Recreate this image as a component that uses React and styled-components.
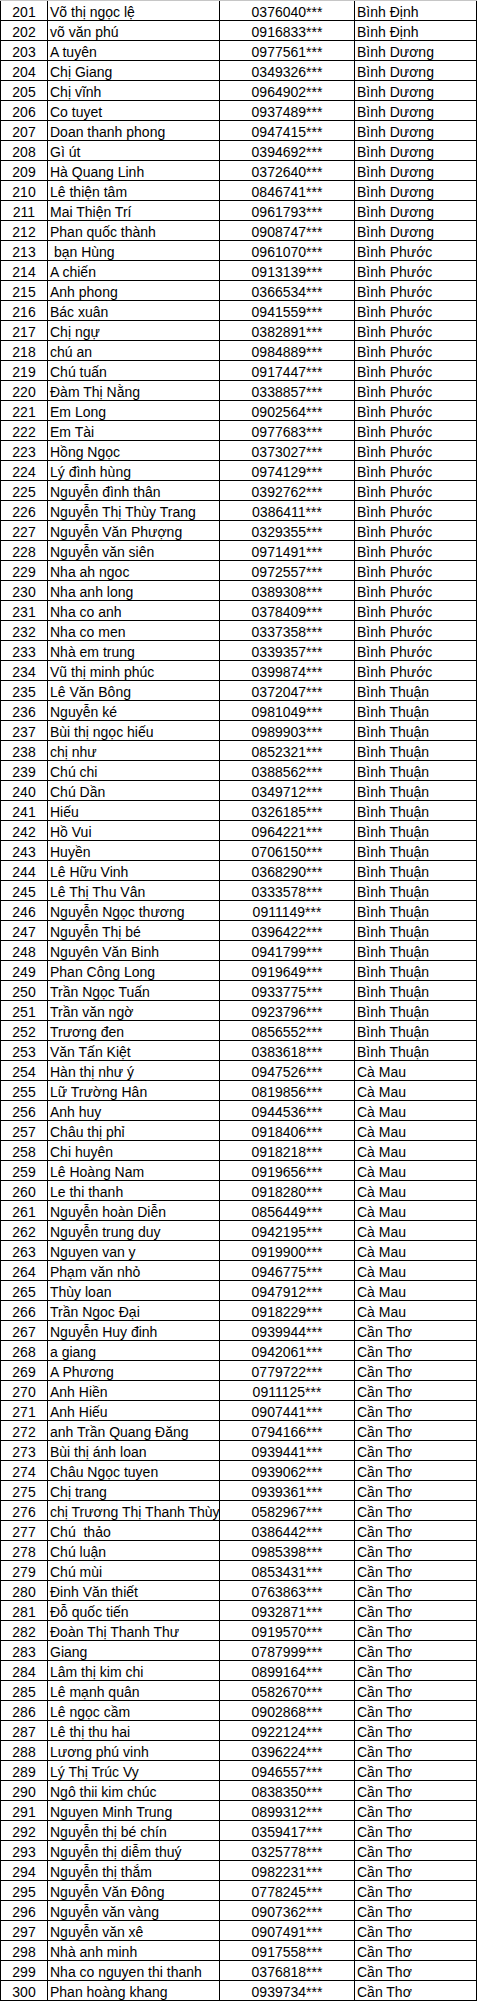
import React from 'react';
import styled, { createGlobalStyle } from 'styled-components';

const GlobalStyle = createGlobalStyle`
  html, body {
    margin: 0;
    padding: 0;
    background: #fff;
  }
  body {
    font-family: "Liberation Sans", Arial, sans-serif;
    color: #000;
  }
`;

const PROVINCES = [
  [201, 202, 'Bình Định'],
  [203, 212, 'Bình Dương'],
  [213, 234, 'Bình Phước'],
  [235, 253, 'Bình Thuận'],
  [254, 266, 'Cà Mau'],
  [267, 300, 'Cần Thơ'],
];

// name, phone prefix (last 3 digits hidden)
const people = [
  ['Võ thị ngọc lệ', '0376040'],
  ['võ văn phú', '0916833'],
  ['A tuyên', '0977561'],
  ['Chị Giang', '0349326'],
  ['Chị vĩnh', '0964902'],
  ['Co tuyet', '0937489'],
  ['Doan thanh phong', '0947415'],
  ['Gì út', '0394692'],
  ['Hà Quang Linh', '0372640'],
  ['Lê thiện tâm', '0846741'],
  ['Mai Thiện Trí', '0961793'],
  ['Phan quốc thành', '0908747'],
  [' bạn Hùng', '0961070'],
  ['A chiến', '0913139'],
  ['Anh phong', '0366534'],
  ['Bác xuân', '0941559'],
  ['Chị ngự', '0382891'],
  ['chú an', '0984889'],
  ['Chú tuấn', '0917447'],
  ['Đàm Thị Nằng', '0338857'],
  ['Em Long', '0902564'],
  ['Em Tài', '0977683'],
  ['Hồng Ngọc', '0373027'],
  ['Lý đình hùng', '0974129'],
  ['Nguyễn đình thân', '0392762'],
  ['Nguyễn Thị Thùy Trang', '0386411'],
  ['Nguyễn Văn Phượng', '0329355'],
  ['Nguyễn văn siên', '0971491'],
  ['Nha ah ngoc', '0972557'],
  ['Nha anh long', '0389308'],
  ['Nha co anh', '0378409'],
  ['Nha co men', '0337358'],
  ['Nhà em trung', '0339357'],
  ['Vũ thị minh phúc', '0399874'],
  ['Lê Văn Bông', '0372047'],
  ['Nguyễn ké', '0981049'],
  ['Bùi thị ngọc hiếu', '0989903'],
  ['chị như', '0852321'],
  ['Chú chi', '0388562'],
  ['Chú Dần', '0349712'],
  ['Hiếu', '0326185'],
  ['Hồ Vui', '0964221'],
  ['Huyền', '0706150'],
  ['Lê Hữu Vinh', '0368290'],
  ['Lê Thị Thu Vân', '0333578'],
  ['Nguyễn Ngọc thương', '0911149'],
  ['Nguyễn Thị bé', '0396422'],
  ['Nguyên Văn Binh', '0941799'],
  ['Phan Công Long', '0919649'],
  ['Trần Ngọc Tuấn', '0933775'],
  ['Trần văn ngờ', '0923796'],
  ['Trương đen', '0856552'],
  ['Văn Tấn Kiệt', '0383618'],
  ['Hàn thị như ý', '0947526'],
  ['Lữ Trường Hân', '0819856'],
  ['Anh huy', '0944536'],
  ['Châu thị phỉ', '0918406'],
  ['Chi huyên', '0918218'],
  ['Lê Hoàng Nam', '0919656'],
  ['Le thi thanh', '0918280'],
  ['Nguyễn hoàn Diễn', '0856449'],
  ['Nguyễn trung duy', '0942195'],
  ['Nguyen van y', '0919900'],
  ['Phạm văn nhỏ', '0946775'],
  ['Thùy loan', '0947912'],
  ['Trần Ngoc Đại', '0918229'],
  ['Nguyễn Huy đinh', '0939944'],
  ['a giang', '0942061'],
  ['A Phương', '0779722'],
  ['Anh Hiền', '0911125'],
  ['Anh Hiếu', '0907441'],
  ['anh Trần Quang Đăng', '0794166'],
  ['Bùi thị ánh loan', '0939441'],
  ['Châu Ngọc tuyen', '0939062'],
  ['Chị trang', '0939361'],
  ['chị Trương Thị Thanh Thùy', '0582967'],
  ['Chú  thảo', '0386442'],
  ['Chú luận', '0985398'],
  ['Chú mùi', '0853431'],
  ['Đinh Văn thiết', '0763863'],
  ['Đỗ quốc tiến', '0932871'],
  ['Đoàn Thị Thanh Thư', '0919570'],
  ['Giang', '0787999'],
  ['Lâm thị kim chi', '0899164'],
  ['Lê mạnh quân', '0582670'],
  ['Lê ngọc cầm', '0902868'],
  ['Lê thị thu hai', '0922124'],
  ['Lương phú vinh', '0396224'],
  ['Lý Thị Trúc Vy', '0946557'],
  ['Ngô thii kim chúc', '0838350'],
  ['Nguyen Minh Trung', '0899312'],
  ['Nguyễn thị bé chín', '0359417'],
  ['Nguyễn thị diễm thuý', '0325778'],
  ['Nguyễn thị thắm', '0982231'],
  ['Nguyễn Văn Đông', '0778245'],
  ['Nguyễn văn vàng', '0907362'],
  ['Nguyễn văn xê', '0907491'],
  ['Nhà anh minh', '0917558'],
  ['Nha co nguyen thi thanh', '0376818'],
  ['Phan hoàng khang', '0939734'],
];

const provinceFor = (no) => PROVINCES.find(([from, to]) => no >= from && no <= to)[2];

const Sheet = styled.div`
  width: 477px;
  border-top: 1px solid #c6c6c6;
  background: #fff;
`;

const Row = styled.div`
  display: grid;
  grid-template-columns: 47px 172px 135px 122px;
  height: 20px;
  box-sizing: border-box;
  border-left: 1px solid #000;
  border-bottom: 1px solid #000;
`;

const Cell = styled.div`
  box-sizing: border-box;
  border-right: 1px solid #000;
  padding: 3px 2px 0;
  font-family: "Liberation Sans", Arial, sans-serif;
  font-size: 14px;
  line-height: 16px;
  color: #000;
  text-align: ${({ $align }) => $align || 'left'};
  white-space: pre;
  overflow: hidden;
`;

const App = () => (
  <>
    <GlobalStyle />
    <Sheet>
      {people.map(([name, phone], i) => {
        const no = 201 + i;
        return (
          <Row key={no}>
            <Cell $align="center">{no}</Cell>
            <Cell>{name}</Cell>
            <Cell $align="center">{phone}***</Cell>
            <Cell>{provinceFor(no)}</Cell>
          </Row>
        );
      })}
    </Sheet>
  </>
);

export default App;
